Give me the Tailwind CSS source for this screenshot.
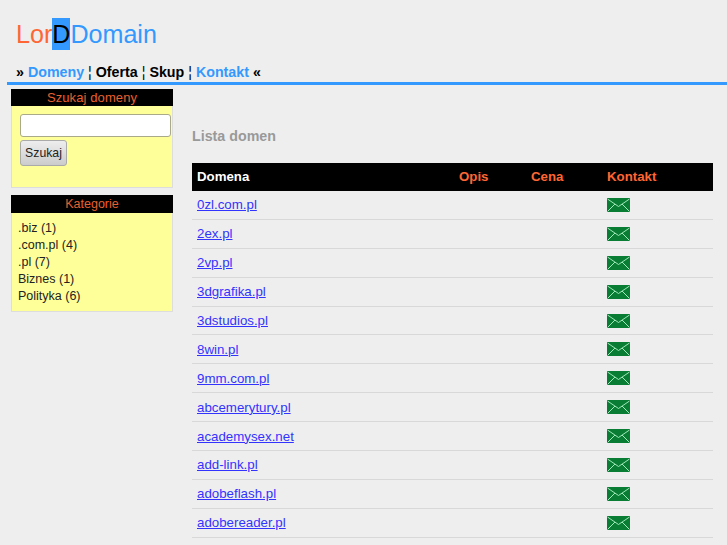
<!DOCTYPE html>
<html>
<head>
<meta charset="utf-8">
<script src="https://cdn.jsdelivr.net/npm/@tailwindcss/browser@4"></script>
</head>
<body class="h-[545px] overflow-hidden bg-[#eeeeee] font-['Liberation_Sans',sans-serif] text-black">
<header class="pl-[7px]">
  <div class="flex h-[64px] items-start pl-[9px] pt-[18px] text-[25.1px] leading-[32px] text-[#3399ff]">
    <span class="text-[#ff6633]">Lor</span><span class="bg-[#3399ff] text-black">D</span><span>Domain</span>
  </div>
  <nav class="h-[21px] border-b-[3px] border-[#3399ff] pl-[9px] text-[14.25px] font-bold leading-[17px]">
    <span>»</span> <a class="text-[#3399ff]">Domeny</a> <span class="font-normal">¦</span> <a>Oferta</a> <span class="font-normal">¦</span> <a>Skup</a> <span class="font-normal">¦</span> <a class="text-[#3399ff]">Kontakt</a> <span>«</span>
  </nav>
</header>
<div class="flex pl-[11px] pr-[14px] pt-[4px]">
  <aside class="w-[162px] shrink-0 text-[13px]">
    <section class="h-[99px] border border-[#dddddd] bg-[#ffff99]">
      <h2 class="-mx-px -mt-px h-[17px] bg-black text-center leading-[17px] tracking-[0.1px] text-[#e8602f]">Szukaj domeny</h2>
      <div class="pl-[8px] pt-[8px]">
        <input type="text" class="block h-[23px] w-[151px] rounded-[3px] border border-[#aaaa88] bg-white">
        <button class="mt-[3px] block h-[26px] w-[47px] rounded-[3px] border border-[#aaaaaa] bg-gradient-to-b from-[#eeeeee] to-[#cccccc] text-[12.25px] text-[#222222]">Szukaj</button>
      </div>
    </section>
    <section class="mt-[7px] h-[117px] border border-[#dddddd] bg-[#ffff99]">
      <h2 class="-mx-px -mt-px h-[18px] bg-black text-center text-[12.5px] leading-[18px] text-[#e8602f]">Kategorie</h2>
      <ul class="pl-[6px] pt-[7px] text-[12.5px] leading-[17px] text-[#222222]">
        <li>.biz (1)</li>
        <li>.com.pl (4)</li>
        <li>.pl (7)</li>
        <li>Biznes (1)</li>
        <li>Polityka (6)</li>
      </ul>
    </section>
  </aside>
  <main class="ml-[19px] flex-1">
    <h1 class="pt-[39px] text-[14.25px] font-bold leading-[17px] text-[#999999]">Lista domen</h1>
    <div class="mt-[18px] flex h-[28px] items-center bg-black text-[13.25px] font-bold">
      <span class="w-[267px] pl-[5px] text-white">Domena</span>
      <span class="w-[72px] text-[#ff6633]">Opis</span>
      <span class="w-[76px] text-[#ff6633]">Cena</span>
      <span class="text-[#ff6633]">Kontakt</span>
    </div>
    <div id="rows" class="text-[13.3px]">
      <div class="flex h-[28.9px] items-center border-b border-[#d8d8d8] pl-[5px]"><a class="w-[410px] pt-px text-[#3333ff] underline">0zl.com.pl</a><svg width="23" height="14" viewBox="0 0 23 14"><rect width="23" height="14" fill="#0a7d35"/><path d="M0.5 1 11.5 8.5 22.5 1M0.5 13.5 8 6M22.5 13.5 15 6" fill="none" stroke="#9fe8b8" stroke-width="1"/></svg></div>
      <div class="flex h-[28.9px] items-center border-b border-[#d8d8d8] pl-[5px]"><a class="w-[410px] pt-px text-[#3333ff] underline">2ex.pl</a><svg width="23" height="14" viewBox="0 0 23 14"><rect width="23" height="14" fill="#0a7d35"/><path d="M0.5 1 11.5 8.5 22.5 1M0.5 13.5 8 6M22.5 13.5 15 6" fill="none" stroke="#9fe8b8" stroke-width="1"/></svg></div>
      <div class="flex h-[28.9px] items-center border-b border-[#d8d8d8] pl-[5px]"><a class="w-[410px] pt-px text-[#3333ff] underline">2vp.pl</a><svg width="23" height="14" viewBox="0 0 23 14"><rect width="23" height="14" fill="#0a7d35"/><path d="M0.5 1 11.5 8.5 22.5 1M0.5 13.5 8 6M22.5 13.5 15 6" fill="none" stroke="#9fe8b8" stroke-width="1"/></svg></div>
      <div class="flex h-[28.9px] items-center border-b border-[#d8d8d8] pl-[5px]"><a class="w-[410px] pt-px text-[#3333ff] underline">3dgrafika.pl</a><svg width="23" height="14" viewBox="0 0 23 14"><rect width="23" height="14" fill="#0a7d35"/><path d="M0.5 1 11.5 8.5 22.5 1M0.5 13.5 8 6M22.5 13.5 15 6" fill="none" stroke="#9fe8b8" stroke-width="1"/></svg></div>
      <div class="flex h-[28.9px] items-center border-b border-[#d8d8d8] pl-[5px]"><a class="w-[410px] pt-px text-[#3333ff] underline">3dstudios.pl</a><svg width="23" height="14" viewBox="0 0 23 14"><rect width="23" height="14" fill="#0a7d35"/><path d="M0.5 1 11.5 8.5 22.5 1M0.5 13.5 8 6M22.5 13.5 15 6" fill="none" stroke="#9fe8b8" stroke-width="1"/></svg></div>
      <div class="flex h-[28.9px] items-center border-b border-[#d8d8d8] pl-[5px]"><a class="w-[410px] pt-px text-[#3333ff] underline">8win.pl</a><svg width="23" height="14" viewBox="0 0 23 14"><rect width="23" height="14" fill="#0a7d35"/><path d="M0.5 1 11.5 8.5 22.5 1M0.5 13.5 8 6M22.5 13.5 15 6" fill="none" stroke="#9fe8b8" stroke-width="1"/></svg></div>
      <div class="flex h-[28.9px] items-center border-b border-[#d8d8d8] pl-[5px]"><a class="w-[410px] pt-px text-[#3333ff] underline">9mm.com.pl</a><svg width="23" height="14" viewBox="0 0 23 14"><rect width="23" height="14" fill="#0a7d35"/><path d="M0.5 1 11.5 8.5 22.5 1M0.5 13.5 8 6M22.5 13.5 15 6" fill="none" stroke="#9fe8b8" stroke-width="1"/></svg></div>
      <div class="flex h-[28.9px] items-center border-b border-[#d8d8d8] pl-[5px]"><a class="w-[410px] pt-px text-[#3333ff] underline">abcemerytury.pl</a><svg width="23" height="14" viewBox="0 0 23 14"><rect width="23" height="14" fill="#0a7d35"/><path d="M0.5 1 11.5 8.5 22.5 1M0.5 13.5 8 6M22.5 13.5 15 6" fill="none" stroke="#9fe8b8" stroke-width="1"/></svg></div>
      <div class="flex h-[28.9px] items-center border-b border-[#d8d8d8] pl-[5px]"><a class="w-[410px] pt-px text-[#3333ff] underline">academysex.net</a><svg width="23" height="14" viewBox="0 0 23 14"><rect width="23" height="14" fill="#0a7d35"/><path d="M0.5 1 11.5 8.5 22.5 1M0.5 13.5 8 6M22.5 13.5 15 6" fill="none" stroke="#9fe8b8" stroke-width="1"/></svg></div>
      <div class="flex h-[28.9px] items-center border-b border-[#d8d8d8] pl-[5px]"><a class="w-[410px] pt-px text-[#3333ff] underline">add-link.pl</a><svg width="23" height="14" viewBox="0 0 23 14"><rect width="23" height="14" fill="#0a7d35"/><path d="M0.5 1 11.5 8.5 22.5 1M0.5 13.5 8 6M22.5 13.5 15 6" fill="none" stroke="#9fe8b8" stroke-width="1"/></svg></div>
      <div class="flex h-[28.9px] items-center border-b border-[#d8d8d8] pl-[5px]"><a class="w-[410px] pt-px text-[#3333ff] underline">adobeflash.pl</a><svg width="23" height="14" viewBox="0 0 23 14"><rect width="23" height="14" fill="#0a7d35"/><path d="M0.5 1 11.5 8.5 22.5 1M0.5 13.5 8 6M22.5 13.5 15 6" fill="none" stroke="#9fe8b8" stroke-width="1"/></svg></div>
      <div class="flex h-[28.9px] items-center border-b border-[#d8d8d8] pl-[5px]"><a class="w-[410px] pt-px text-[#3333ff] underline">adobereader.pl</a><svg width="23" height="14" viewBox="0 0 23 14"><rect width="23" height="14" fill="#0a7d35"/><path d="M0.5 1 11.5 8.5 22.5 1M0.5 13.5 8 6M22.5 13.5 15 6" fill="none" stroke="#9fe8b8" stroke-width="1"/></svg></div>
      <div class="flex h-[28.9px] items-center pl-[415px]"><svg width="23" height="14" viewBox="0 0 23 14"><rect width="23" height="14" fill="#0a7d35"/><path d="M0.5 1 11.5 8.5 22.5 1M0.5 13.5 8 6M22.5 13.5 15 6" fill="none" stroke="#9fe8b8" stroke-width="1"/></svg></div>
    </div>
  </main>
</div>
</body>
</html>
